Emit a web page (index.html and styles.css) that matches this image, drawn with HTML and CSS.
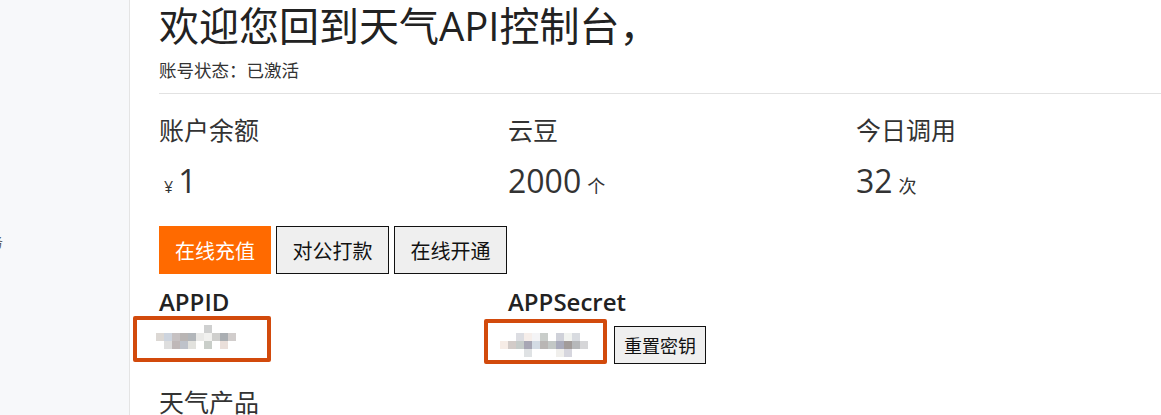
FILE: index.html
```html
<!DOCTYPE html>
<html lang="zh-CN">
<head>
    <meta charset="UTF-8">
    <title>天气API控制台</title>
    <link rel="stylesheet" href="styles.css">
</head>
<body>
<div class="sidebar">
    <div class="nav-item">务</div>
</div>

<div class="main">
    <h1 class="title">欢迎您回到天气API控制台，</h1>
    <div class="status">账号状态：已激活</div>
    <div class="divider"></div>

    <div class="stats">
        <div class="stat">
            <div class="stat-label">账户余额</div>
            <div class="stat-value"><span class="yen">¥</span>1</div>
        </div>
        <div class="stat">
            <div class="stat-label">云豆</div>
            <div class="stat-value">2000<span class="unit">个</span></div>
        </div>
        <div class="stat">
            <div class="stat-label">今日调用</div>
            <div class="stat-value">32<span class="unit">次</span></div>
        </div>
    </div>

    <div class="actions">
        <button class="btn btn-primary">在线充值</button>
        <button class="btn">对公打款</button>
        <button class="btn">在线开通</button>
    </div>

    <div class="keys">
        <div class="key">
            <div class="key-label">APPID</div>
            <div class="key-row">
                <div class="secret-box appid-box">
                    <!-- 打码后的APPID -->
                    <svg width="130" height="38" viewBox="0 0 130 38">
                        <rect x="67" y="5" width="8" height="8" fill="#cfd0d0"/>
                        <rect x="19" y="13" width="8" height="8" fill="#dcd8d4"/>
                        <rect x="27" y="13" width="8" height="8" fill="#cdd4de"/>
                        <rect x="35" y="13" width="8" height="8" fill="#c6c1c2"/>
                        <rect x="43" y="13" width="8" height="8" fill="#b9b5b4"/>
                        <rect x="51" y="13" width="8" height="8" fill="#b2b6ba"/>
                        <rect x="59" y="13" width="8" height="8" fill="#e9e9e7"/>
                        <rect x="67" y="13" width="8" height="8" fill="#f1f1ef"/>
                        <rect x="75" y="13" width="8" height="8" fill="#cfcfcd"/>
                        <rect x="83" y="13" width="8" height="8" fill="#aaaeb2"/>
                        <rect x="91" y="13" width="8" height="8" fill="#d1cdcc"/>
                        <rect x="27" y="21" width="8" height="8" fill="#dedede"/>
                        <rect x="35" y="21" width="8" height="8" fill="#bfb8b8"/>
                        <rect x="43" y="21" width="8" height="8" fill="#bec2ca"/>
                        <rect x="51" y="21" width="8" height="8" fill="#e2e2de"/>
                        <rect x="67" y="21" width="8" height="8" fill="#c9cec9"/>
                        <rect x="83" y="21" width="8" height="8" fill="#eadfda"/>
                    </svg>
                </div>
            </div>
        </div>
        <div class="key">
            <div class="key-label">APPSecret</div>
            <div class="key-row">
                <div class="secret-box appsecret-box">
                    <!-- 打码后的APPSecret -->
                    <svg width="115" height="37" viewBox="0 0 115 37">
                        <rect x="28" y="10" width="8" height="8" fill="#dcdde2"/>
                        <rect x="36" y="10" width="8" height="8" fill="#f6eeea"/>
                        <rect x="44" y="10" width="8" height="8" fill="#f4f4f6"/>
                        <rect x="52" y="10" width="8" height="8" fill="#c9cdca"/>
                        <rect x="68" y="10" width="8" height="8" fill="#cfd1d9"/>
                        <rect x="76" y="10" width="8" height="8" fill="#f1f3f0"/>
                        <rect x="84" y="10" width="8" height="8" fill="#d8dbe0"/>
                        <rect x="12" y="18" width="8" height="8" fill="#f6ece6"/>
                        <rect x="20" y="18" width="8" height="8" fill="#d2cbc8"/>
                        <rect x="28" y="18" width="8" height="8" fill="#c5cbc9"/>
                        <rect x="36" y="18" width="8" height="8" fill="#a7a6b4"/>
                        <rect x="44" y="18" width="8" height="8" fill="#d3dbe4"/>
                        <rect x="52" y="18" width="8" height="8" fill="#b9b6b4"/>
                        <rect x="60" y="18" width="8" height="8" fill="#c3c8c6"/>
                        <rect x="68" y="18" width="8" height="8" fill="#a9abbb"/>
                        <rect x="76" y="18" width="8" height="8" fill="#a29c9a"/>
                        <rect x="84" y="18" width="8" height="8" fill="#b6b8ba"/>
                        <rect x="92" y="18" width="8" height="8" fill="#d6d6d8"/>
                        <rect x="36" y="26" width="8" height="8" fill="#dfe2e4"/>
                        <rect x="68" y="26" width="8" height="8" fill="#f0efec"/>
                        <rect x="76" y="26" width="8" height="8" fill="#d6d6de"/>
                    </svg>
                </div>
                <button class="btn btn-small">重置密钥</button>
            </div>
        </div>
    </div>

    <h2 class="section-title">天气产品</h2>
</div>
</body>
</html>
```

FILE: styles.css
```css
html, body {
    margin: 0;
    height: 100%;
    overflow: hidden;
}
body {
    display: flex;
    font-family: "Open Sans", "Noto Sans CJK SC", sans-serif;
    color: #333;
    background: #fff;
}
.sidebar {
    width: 130px;
    flex-shrink: 0;
    background-color: #f7f8fa;
    border-right: 1px solid #e4e4e4;
    overflow: hidden;
    padding-top: 230px;
    box-sizing: border-box;
}
.nav-item {
    margin-left: -11px;
    font-size: 14px;
    line-height: 24px;
    color: #555;
}
.main {
    flex: 1;
    padding-left: 29px;
}
.title {
    margin: 0;
    font-size: 40px;
    font-weight: normal;
    line-height: 52px;
    color: #222;
}
.status {
    margin-top: 6px;
    font-size: 17.5px;
    line-height: 24px;
}
.divider {
    margin-top: 11px;
    border-top: 1px solid #e2e2e2;
}
.stats {
    display: grid;
    grid-template-columns: 349px 348px 1fr;
    margin-top: 19px;
}
.stat-label {
    font-size: 25px;
    line-height: 34px;
}
.stat-value {
    margin-top: 12px;
    font-size: 32px;
    line-height: 44px;
}
.yen {
    font-size: 16px;
    margin: 0 5px 0 5px;
}
.unit {
    font-size: 18px;
    margin-left: 6px;
}
.actions {
    display: flex;
    gap: 5px;
    margin-top: 17px;
}
.btn {
    width: 113px;
    height: 48px;
    padding: 0;
    font-family: "Noto Sans CJK SC", sans-serif;
    font-size: 20px;
    color: #111;
    background-color: #efefef;
    border: 1px solid #111;
    box-sizing: border-box;
    cursor: pointer;
}
.btn-primary {
    width: 112px;
    background-color: #ff6a00;
    border-color: #ff6a00;
    color: #fff;
}
.keys {
    display: grid;
    grid-template-columns: 349px 1fr;
    margin-top: 14px;
}
.key-label {
    font-size: 24px;
    font-weight: 600;
    line-height: 28px;
    color: #222;
}
.key-row {
    display: flex;
    align-items: flex-end;
}
.secret-box {
    border: 4px solid #d24a0c;
    border-radius: 2px;
    background: #fff;
}
.secret-box svg {
    display: block;
}
.appid-box {
    margin-left: -26px;
}
.appsecret-box {
    margin-left: -24px;
    margin-top: 3px;
}
.btn-small {
    width: 92px;
    height: 38px;
    margin-left: 7px;
    font-size: 18px;
}
.section-title {
    margin: 21px 0 0 0;
    font-size: 25px;
    font-weight: normal;
    line-height: 34px;
}
```
